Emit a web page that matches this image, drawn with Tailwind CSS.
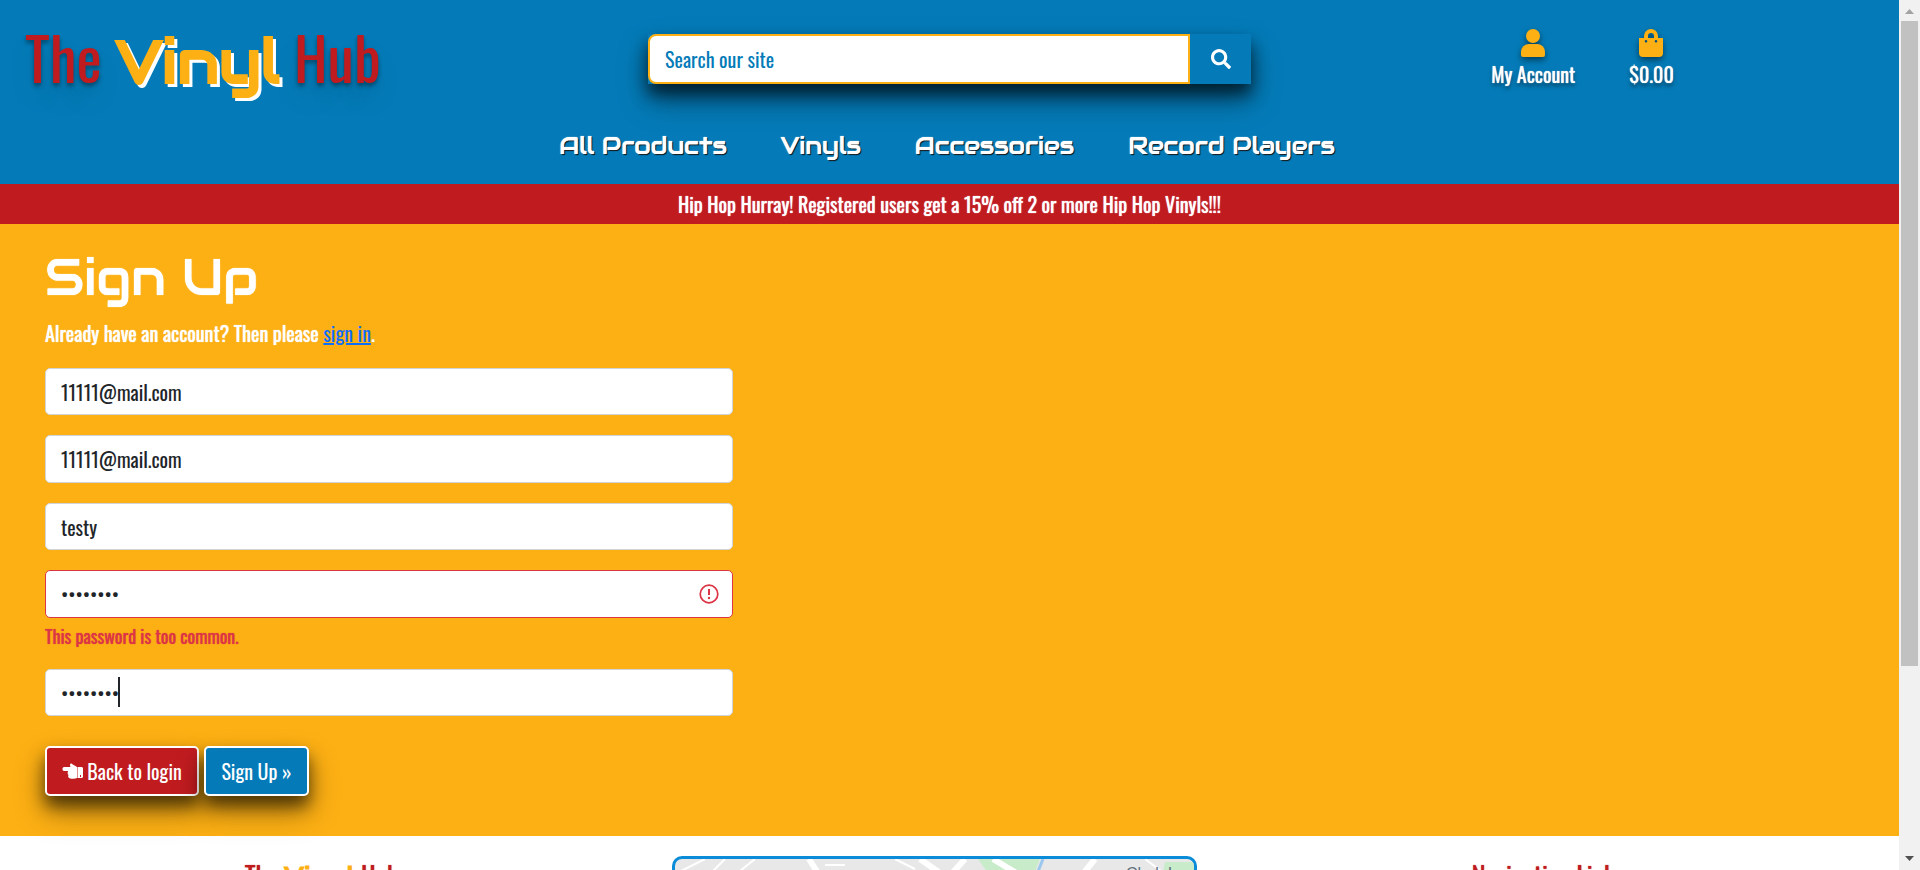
<!DOCTYPE html>
<html lang="en">
<head>
<meta charset="utf-8">
<meta name="viewport" content="width=device-width, initial-scale=1">
<title>The Vinyl Hub - Sign Up</title>
<script src="https://cdn.jsdelivr.net/npm/@tailwindcss/browser@4"></script>
</head>
<body class="flex h-screen overflow-hidden bg-white font-['Oswald','Liberation_Sans_Narrow','Liberation_Sans',sans-serif] text-[20px] leading-[30px] text-[#212529]">
<div class="min-w-0 flex-1 overflow-hidden">
  <header class="h-[184px] bg-[#047bb8]">
    <div class="grid h-[118px] grid-cols-3">
      <a href="#" class="flex items-baseline gap-[14px] pt-4 pl-[25px] text-[60px] leading-[80px] text-[#c01c20] [text-shadow:0_3px_4px_rgba(0,0,0,.4),0_16px_24px_rgba(0,0,0,.12)]"><span>The</span><span class="font-['Audiowide','DejaVu_Sans',sans-serif] text-[60px] font-bold text-[#fdb014] [text-shadow:3px_3px_0_#fff]">Vinyl</span><span>Hub</span></a>
      <form class="mt-[34px] flex h-[50px] w-[603px] justify-self-center bg-[#047bb8] shadow-[0_16px_30px_rgba(0,0,0,.4),0_10px_16px_rgba(0,0,0,.6)]">
        <input type="search" aria-label="Search our site" placeholder="Search our site" class="min-w-0 flex-1 rounded-l-lg border-2 border-[#fdb014] bg-white px-[15px] placeholder:text-[#047bb8] placeholder:opacity-100">
        <button type="button" aria-label="Search" class="flex w-[61px] items-center justify-center text-white"><svg class="size-5" viewBox="0 0 512 512" fill="currentColor"><path d="M505 442.700 405.300 343c-4.500-4.500-10.600-7-17-7H372c27.600-35.300 44-79.700 44-128C416 93.100 322.900 0 208 0S0 93.100 0 208s93.100 208 208 208c48.300 0 92.700-16.400 128-44v16.300c0 6.400 2.500 12.500 7 17l99.700 99.700c9.400 9.400 24.600 9.400 33.900 0l28.300-28.300c9.400-9.400 9.400-24.600.1-34zM208 336c-70.700 0-128-57.200-128-128 0-70.700 57.200-128 128-128 70.700 0 128 57.200 128 128 0 70.700-57.200 128-128 128z"/></svg></button>
      </form>
      <div class="flex justify-center gap-[54px] pt-7 text-white [text-shadow:0_0_1px_#fff,0_3px_4px_rgba(0,0,0,.5)]">
        <a href="#" class="flex flex-col items-center gap-px"><svg class="h-[30px] w-[26px] drop-shadow-[0_3px_3px_rgba(0,0,0,.5)]" viewBox="0 0 26 30" fill="#fdb014"><circle cx="13" cy="8" r="7"/><path d="M1 27v-3a8 8 0 0 1 8-8h8a8 8 0 0 1 8 8v3a2 2 0 0 1-2 2H3a2 2 0 0 1-2-2z"/></svg>My Account</a>
        <a href="#" class="flex flex-col items-center gap-px"><svg class="h-[30px] w-[26px] drop-shadow-[0_3px_3px_rgba(0,0,0,.5)]" viewBox="0 0 26 30" fill="#fdb014"><path fill-rule="evenodd" d="M6 10V8a7 7 0 0 1 14 0v2h5v15a4 4 0 0 1-4 4H5a4 4 0 0 1-4-4V10zm4 0h6V8a3 3 0 0 0-6 0zm-2 2a1.300 1.300 0 1 0 0 2.600 1.300 1.300 0 0 0 0-2.600m10 0a1.300 1.300 0 1 0 0 2.600 1.300 1.300 0 0 0 0-2.600"/></svg>$0.00</a>
      </div>
    </div>
    <nav class="flex justify-center gap-[54px] pt-[13px] pr-[5px] font-['Audiowide','DejaVu_Sans',sans-serif] text-[24px] text-white [text-shadow:0_0_1px_#fff,1px_1px_1px_#000]">
      <a href="#">All Products</a><a href="#">Vinyls</a><a href="#">Accessories</a><a href="#">Record Players</a>
    </nav>
  </header>
  <p class="h-10 bg-[#c01c20] text-center leading-[40px] text-white [text-shadow:0_0_1px_#fff]">Hip Hop Hurray! Registered users get a 15% off 2 or more Hip Hop Vinyls!!!</p>
  <main class="h-[612px] bg-[#fdb014] px-[45px] pt-6">
    <h1 class="font-['Audiowide','DejaVu_Sans',sans-serif] text-[50px] leading-[60px] text-white [text-shadow:0_0_1px_#fff]">Sign Up</h1>
    <p class="mt-2.5 text-white [text-shadow:0_0_1px_#fff]">Already have an account? Then please <a href="#" class="text-[#0d6efd] underline [text-shadow:none]">sign in</a>.</p>
    <form class="mt-5 w-[688px]">
      <div class="flex flex-col gap-5">
        <input type="email" aria-label="E-mail" value="11111@mail.com" class="h-[47px] rounded-[5px] border border-[#ced4da] bg-white px-[15px]">
        <input type="email" aria-label="E-mail confirmation" value="11111@mail.com" class="h-[48px] rounded-[5px] border border-[#ced4da] bg-white px-[15px]">
        <input type="text" aria-label="Username" value="testy" class="h-[47px] rounded-[5px] border border-[#ced4da] bg-white px-[15px]">
        <div>
          <div class="relative"><input type="password" aria-label="Password" aria-describedby="pw-error" value="password" class="h-[48px] w-full rounded-[5px] border border-[#dc3545] bg-white px-[15px]">
          <svg class="absolute top-[14px] right-[14px] size-5" viewBox="0 0 20 20" fill="none" stroke="#dc3545" stroke-width="1.700"><circle cx="10" cy="10" r="8.800"/><path d="M10 5v6" stroke-width="2"/><circle cx="10" cy="14" r="1.200" fill="#dc3545" stroke="none"/></svg></div>
          <p id="pw-error" class="mt-[5px] text-[18px] leading-[26px] text-[#dc3545] [text-shadow:0_0_1px_#dc3545]">This password is too common.</p>
        </div>
        <div class="relative"><input type="password" aria-label="Password (again)" value="password" class="h-[47px] w-full rounded-[5px] border border-[#ced4da] bg-white px-[15px]"><span class="absolute top-2 left-[73px] h-[30px] w-0.5 bg-[#212529]"></span></div>
      </div>
      <div class="mt-[30px] flex gap-[5px] text-white">
        <a href="#" class="flex h-[50px] w-[154px] items-center justify-center gap-1 rounded-[5px] border-2 border-white bg-[#c01c20] shadow-[0_16px_30px_rgba(0,0,0,.35),0_10px_16px_rgba(0,0,0,.55)]"><svg class="h-4 w-[21px]" viewBox="0 0 21 16" fill="currentColor"><path d="M2 4h6c1 0 0-1 0-2 0-1 1-2 2-1l5 3v11c-2 1-7 1-8 0-1-1-1-2-.5-3C5.500 11 5.500 10 6 8H2C0 8 0 4 2 4z"/><path fill-rule="evenodd" d="M15.500 4H20l1 1v9l-1 1h-4.500zm2.500 8v2h1v-2z"/></svg>Back to login</a>
        <button type="button" class="h-[50px] w-[105px] rounded-[5px] border-2 border-white bg-[#047bb8] shadow-[0_16px_30px_rgba(0,0,0,.35),0_10px_16px_rgba(0,0,0,.55)]">Sign Up »</button>
      </div>
    </form>
  </main>
  <footer class="grid grid-cols-3 pt-5 pr-[44px] pl-[15px] text-center text-[#c01c20]">
    <h2 class="pt-1 text-[26px] [text-shadow:0_0_1px_#c01c20]">The <span class="font-['Audiowide','DejaVu_Sans',sans-serif] font-bold text-[#fdb014] [text-shadow:none]">Vinyl</span> Hub</h2>
    <svg class="h-[300px] w-[525px] justify-self-center rounded-[10px] border-3 border-[#0a8cd9] bg-[#e8e8e8]" viewBox="0 0 519 294" role="img" aria-label="Map"><path d="M303 0h62l-8 20h-40z" fill="#c8ebca"/><path d="M490 3h30v30h-36z" fill="#c8ebca"/><path d="M134 0l14 22M290 0l-20 22M420 0l-18 22M318 0l30 18M245 0l20 14" stroke="#fff" stroke-width="6"/><path d="M368 0l-8 20" stroke="#9cc8f0" stroke-width="3"/><path d="M0 15l30-15M30 20L50 0M60 16L80 0M150 6h20M220 0l20 10M470 0l16 12" stroke="#fff" stroke-width="2"/><text x="451" y="20" font-family="Liberation Sans" font-size="16" fill="#5f7180">Clerk In</text></svg>
    <h2 class="pt-1 text-[26px] [text-shadow:0_0_1px_#c01c20]">Navigation Links</h2>
  </footer>
</div>
<div class="flex w-[21px] flex-col items-center justify-between bg-[#f1f1f1]" aria-hidden="true">
  <svg class="h-[21px] w-[21px]" viewBox="0 0 21 21"><path d="M6 14l4.500-5 4.500 5z" fill="#a3a3a3"/></svg>
  <div class="h-[645px] w-[17px] bg-[#c1c1c1]"></div>
  <div class="flex-1"></div>
  <svg class="h-[21px] w-[21px]" viewBox="0 0 21 21"><path d="M6 7l4.500 5L15 7z" fill="#505050"/></svg>
</div>
</body>
</html>
